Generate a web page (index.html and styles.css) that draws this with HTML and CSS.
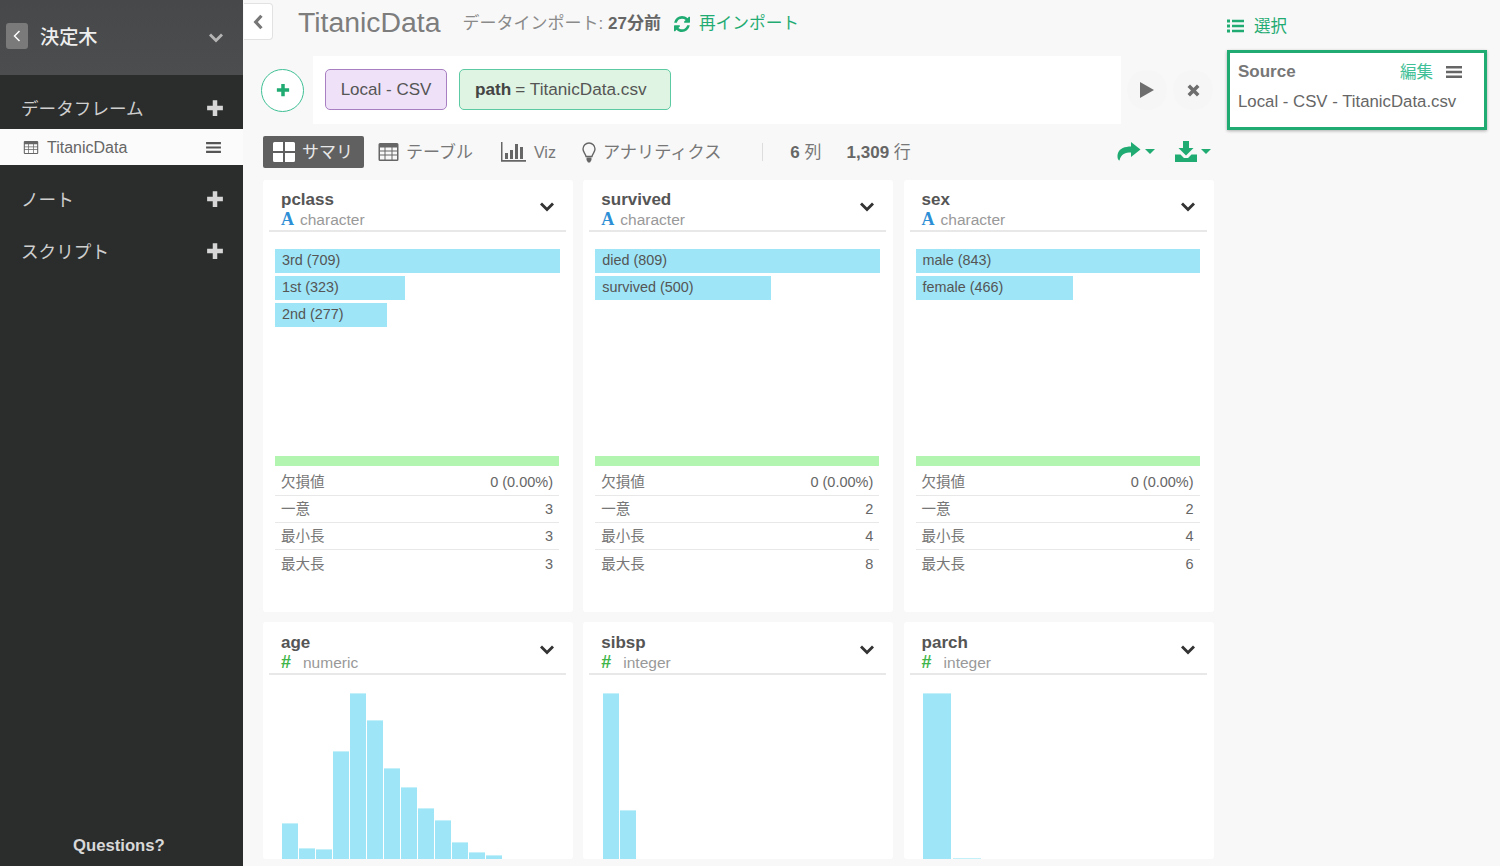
FILE: index.html
```html
<!DOCTYPE html>
<html lang="ja">
<head>
<meta charset="utf-8">
<title>TitanicData</title>
<link rel="stylesheet" href="styles.css">
</head>
<body>
<svg class="defs" width="0" height="0">
  <symbol id="plus" viewBox="0 0 16 16"><path d="M6 1h4v5h5v4h-5v5H6v-5H1V6h5z"/></symbol>
  <symbol id="menu" viewBox="0 0 16 14"><path d="M0 1h16v2.4H0zM0 5.800h16v2.400H0zM0 10.600h16V13H0z"/></symbol>
  <symbol id="chev" viewBox="0 0 16 12"><path d="M1 3.500 3 1.500 8 6.500 13 1.500 15 3.500 8 10.500z"/></symbol>
  <symbol id="table" viewBox="0 0 20 18"><path fill-rule="evenodd" d="M1.500 0h17A1.500 1.500 0 0 1 20 1.500v15a1.500 1.500 0 0 1-1.500 1.500h-17A1.500 1.500 0 0 1 0 16.500v-15A1.500 1.500 0 0 1 1.500 0zM1.500 4.500V7.500h4.500V4.500zM7 4.500V7.500h6V4.500zM14 4.500V7.500h4.500V4.500zM1.500 8.500V11.500h4.500V8.500zM7 8.500V11.500h6V8.500zM14 8.500V11.500h4.500V8.500zM1.500 12.500V16.500h4.500V12.500zM7 12.500V16.500h6V12.500zM14 12.500V16.500h4.500V12.500z"/></symbol>
</svg>

<nav class="sidebar">
  <header class="project">
    <span class="back-chip"><svg width="8" height="12" viewBox="0 0 8 12"><path d="M6.500 1 1.500 6l5 5" fill="none" stroke="#fff" stroke-width="1.500"/></svg></span>
    <span class="project-name">決定木</span>
    <svg class="project-chev" width="16" height="12"><use href="#chev"/></svg>
  </header>
  <div class="side-head side-head-first"><span>データフレーム</span><svg width="18" height="18"><use href="#plus"/></svg></div>
  <div class="side-item">
    <svg class="side-item-icon" width="16" height="13"><use href="#table"/></svg>
    <span class="side-item-name">TitanicData</span>
    <svg class="side-item-menu" width="15" height="13"><use href="#menu"/></svg>
  </div>
  <div class="side-head side-head-note"><span>ノート</span><svg width="18" height="18"><use href="#plus"/></svg></div>
  <div class="side-head side-head-script"><span>スクリプト</span><svg width="18" height="18"><use href="#plus"/></svg></div>
  <div class="questions">Questions?</div>
</nav>

<main class="main">
  <div class="title-row">
    <button class="collapse"><svg width="12" height="16" viewBox="0 0 10 14"><path d="M8 1.500 3 7l5 5.500" fill="none" stroke="#777" stroke-width="2.800"/></svg></button>
    <h1 class="title">TitanicData</h1>
    <span class="imported">データインポート: <b>27分前</b></span>
    <svg class="refresh" width="16" height="16" viewBox="0 0 1536 1536"><path d="M1511 928q0 5-1 7-64 268-268 434.500t-478 166.500q-146 0-282.500-55t-243.500-157l-129 129q-19 19-45 19t-45-19-19-45v-448q0-26 19-45t45-19h448q26 0 45 19t19 45-19 45l-137 137q71 66 161 102t187 36q134 0 250-65t186-179q11-17 53-117 8-23 30-23h192q13 0 22.500 9.500t9.500 22.500zm25-800v448q0 26-19 45t-45 19h-448q-26 0-45-19t-19-45 19-45l138-138q-148-137-349-137-134 0-250 65t-186 179q-11 17-53 117-8 23-30 23h-199q-13 0-22.500-9.500t-9.500-22.500v-7q65-268 270-434.500t480-166.500q146 0 284 55.500t245 156.500l130-129q19-19 45-19t45 19 19 45z"/></svg>
    <span class="reimport">再インポート</span>
  </div>

  <div class="command-row">
    <button class="add"><svg width="14" height="14"><use href="#plus"/></svg></button>
    <div class="command">
      <span class="chip chip-source">Local - CSV</span>
      <span class="chip chip-arg"><b>path</b> = TitanicData.csv</span>
    </div>
    <button class="round"><svg width="14" height="16" viewBox="0 0 14 16"><path d="M0 0 14 8 0 16z"/></svg></button>
    <button class="round round-x"><svg width="13" height="13" viewBox="0 0 11 11"><path d="M1.500 1.500l8 8M9.500 1.500l-8 8" stroke="#6e6e6e" stroke-width="3" fill="none"/></svg></button>
  </div>

  <div class="toolbar">
    <span class="tab tab-active">
      <svg width="22" height="20" viewBox="0 0 22 20"><path d="M1.500 0H10v9H0V1.500A1.500 1.500 0 0 1 1.500 0zM12 0h8.500A1.500 1.500 0 0 1 22 1.500V9H12zM0 11h10v9H1.500A1.500 1.500 0 0 1 0 18.500zM12 11h10v7.500a1.500 1.500 0 0 1-1.500 1.500H12z"/></svg>
      <span class="tab-label">サマリ</span>
    </span>
    <span class="tab tab-table"><svg width="21" height="18"><use href="#table"/></svg><span class="tab-label">テーブル</span></span>
    <span class="tab tab-viz">
      <svg width="25" height="20" viewBox="0 0 25 20"><path d="M0 0h1.500v18H25v1.800H0zM4 11h3v6H4zM9 8h3v9H9zM14 2h3v15h-3zM19 5h3v12h-3z"/></svg>
      <span class="tab-label-latin">Viz</span>
    </span>
    <span class="tab tab-bulb">
      <svg width="14" height="21" viewBox="0 0 14 21"><path fill="none" stroke="#666" stroke-width="1.400" d="M7 1a6 6 0 0 0-6 6c0 3 2.500 4.500 3 7.500h6c.5-3 3-4.500 3-7.500a6 6 0 0 0-6-6z"/><path fill="#666" d="M4.500 15.500h5v2.500l-1.500 2.500H6L4.500 18z"/></svg>
      <span class="tab-label">アナリティクス</span>
    </span>
    <span class="divider"></span>
    <span class="count"><b>6</b> 列</span>
    <span class="count count-rows"><b>1,309</b> 行</span>
    <span class="tool-icons">
      <svg width="24" height="20" viewBox="0 0 24 20"><path d="M14 1 23.500 8.500 14 16V11.500C8.500 11.500 4 13 2.500 19.500 0.500 19 0 15 1 12 2.500 7.500 8 5.500 14 5.500z"/></svg>
      <i class="caret"></i>
      <svg class="dl" width="22" height="21" viewBox="0 0 22 21"><path d="M8 0h6v7h4.500L11 14.500 3.500 7H8zM0 13.500h5.500L9 17h4l3.500-3.500H22V21H0z"/></svg>
      <i class="caret"></i>
    </span>
  </div>

  <div class="cards">
    <section class="card">
      <header class="card-head"><div><h2>pclass</h2><p><b class="type-a">A</b>character</p></div><svg width="16" height="12"><use href="#chev"/></svg></header>
      <div class="levels">
        <div class="level" style="width:285px">3rd (709)</div>
        <div class="level" style="width:130px">1st (323)</div>
        <div class="level" style="width:112px">2nd (277)</div>
      </div>
      <div class="valid"></div>
      <div class="stats">
        <div><span>欠損値</span><span>0 (0.00%)</span></div>
        <div><span>一意</span><span>3</span></div>
        <div><span>最小長</span><span>3</span></div>
        <div><span>最大長</span><span>3</span></div>
      </div>
    </section>
    <section class="card">
      <header class="card-head"><div><h2>survived</h2><p><b class="type-a">A</b>character</p></div><svg width="16" height="12"><use href="#chev"/></svg></header>
      <div class="levels">
        <div class="level" style="width:285px">died (809)</div>
        <div class="level" style="width:176px">survived (500)</div>
      </div>
      <div class="valid"></div>
      <div class="stats">
        <div><span>欠損値</span><span>0 (0.00%)</span></div>
        <div><span>一意</span><span>2</span></div>
        <div><span>最小長</span><span>4</span></div>
        <div><span>最大長</span><span>8</span></div>
      </div>
    </section>
    <section class="card">
      <header class="card-head"><div><h2>sex</h2><p><b class="type-a">A</b>character</p></div><svg width="16" height="12"><use href="#chev"/></svg></header>
      <div class="levels">
        <div class="level" style="width:284px">male (843)</div>
        <div class="level" style="width:157px">female (466)</div>
      </div>
      <div class="valid"></div>
      <div class="stats">
        <div><span>欠損値</span><span>0 (0.00%)</span></div>
        <div><span>一意</span><span>2</span></div>
        <div><span>最小長</span><span>4</span></div>
        <div><span>最大長</span><span>6</span></div>
      </div>
    </section>
    <section class="card card-short">
      <header class="card-head"><div><h2>age</h2><p><b class="type-n">#</b>numeric</p></div><svg width="16" height="12"><use href="#chev"/></svg></header>
      <div class="hist hist-age">
        <i style="height:36px"></i><i style="height:11px"></i><i style="height:10px"></i><i style="height:108px"></i><i style="height:166px"></i><i style="height:139px"></i><i style="height:91px"></i><i style="height:72px"></i><i style="height:51px"></i><i style="height:39px"></i><i style="height:17px"></i><i style="height:7px"></i><i style="height:4px"></i>
      </div>
    </section>
    <section class="card card-short">
      <header class="card-head"><div><h2>sibsp</h2><p><b class="type-n">#</b>integer</p></div><svg width="16" height="12"><use href="#chev"/></svg></header>
      <div class="hist hist-sibsp"><i style="height:166px"></i><i style="height:49px"></i></div>
    </section>
    <section class="card card-short">
      <header class="card-head"><div><h2>parch</h2><p><b class="type-n">#</b>integer</p></div><svg width="16" height="12"><use href="#chev"/></svg></header>
      <div class="hist hist-parch"><i style="height:166px"></i><i style="height:1px"></i></div>
    </section>
  </div>
</main>

<aside class="aside">
  <div class="select">
    <svg width="17" height="14" viewBox="0 0 17 14"><path d="M0 .5h3v3H0zM5 .8h12v2.400H5zM0 5.500h3v3H0zM5 5.800h12v2.400H5zM0 10.500h3v3H0zM5 10.800h12v2.400H5z"/></svg>
    <span>選択</span>
  </div>
  <div class="step">
    <div class="step-head">
      <b>Source</b>
      <span class="step-edit">編集</span>
      <svg width="16" height="14"><use href="#menu"/></svg>
    </div>
    <div class="step-desc">Local - CSV - TitanicData.csv</div>
  </div>
</aside>
</body>
</html>
```

FILE: styles.css
```css
* { box-sizing: border-box; }
html, body { height: 100%; }
body {
  margin: 0;
  height: 866px;
  overflow: hidden;
  display: flex;
  background: #f8f8f8;
  color: #555;
  font-family: "Liberation Sans", "Noto Sans CJK JP", sans-serif;
}
h1, h2, p { margin: 0; font-weight: normal; }
button { padding: 0; font: inherit; cursor: pointer; }
.defs { position: absolute; }

/* sidebar */
.sidebar {
  width: 243px;
  flex: none;
  height: 866px;
  display: flex;
  flex-direction: column;
  background: #2b2d2d;
  color: #c9c9c9;
}
.project {
  height: 75px;
  flex: none;
  display: flex;
  align-items: center;
  padding: 0 19px 3px 6px;
  background: linear-gradient(#474849, #4c4d4f);
}
.back-chip {
  width: 22px;
  height: 26px;
  display: flex;
  align-items: center;
  justify-content: center;
  border-radius: 3px;
  background: #7a7a7a;
}
.project-name {
  margin: -1px 0 0 12px;
  font-size: 19.200px;
  font-weight: 500;
  color: #eee;
}
.project-chev { margin: 4px 0 0 auto; fill: #b5b5b5; }
.side-head {
  display: flex;
  align-items: center;
  justify-content: space-between;
  padding: 0 19px 0 21px;
  font-size: 17.600px;
  height: 24px;
  color: #cfcfcf;
}
.side-head span { margin-top: -1px; }
.side-head svg { fill: #d6d6d6; }
.side-head-first { margin-top: 21px; margin-bottom: 9px; }
.side-head-note { margin-top: 22px; }
.side-head-script { margin-top: 28px; }
.side-item {
  height: 36px;
  flex: none;
  display: flex;
  align-items: center;
  padding: 0 22px 0 23px;
  background: #fbfbfb;
  color: #666;
  font-size: 16px;
}
.side-item-icon { fill: #666; }
.side-item-name { margin: 1px 0 0 8px; }
.side-item-menu { margin-left: auto; fill: #555; }
.questions {
  margin-top: auto;
  padding: 0 0 10px 73px;
  font-size: 16.700px;
  font-weight: bold;
  color: #d8d8d8;
}

/* main */
.main { width: 984px; flex: none; }
.title-row { height: 56px; display: flex; align-items: flex-start; }
.collapse {
  width: 29px;
  height: 37px;
  margin: 3px 0 0 1px;
  display: flex;
  align-items: center;
  justify-content: center;
  background: #fff;
  border: 1.500px solid #e2e2e2;
  border-left: none;
  border-radius: 0 4px 4px 0;
}
.title {
  margin: 4px 0 0 25px;
  font-size: 28.400px;
  line-height: 36px;
  color: #7d7d7d;
}
.imported {
  margin: 13px 0 0 22px;
  font-size: 17px;
  line-height: 22px;
  color: #8a8a8a;
}
.imported b { color: #666; }
.refresh { margin: 16px 0 0 13px; fill: #1fab72; }
.reimport {
  margin: 13px 0 0 9px;
  font-size: 16.700px;
  line-height: 22px;
  color: #1fab72;
}

.command-row { height: 68px; display: flex; align-items: center; padding-left: 18px; }
.add {
  width: 43px;
  height: 43px;
  flex: none;
  display: flex;
  align-items: center;
  justify-content: center;
  border: 1.500px solid #3fc096;
  border-radius: 50%;
  background: #fff;
  fill: #1fab72;
}
.command {
  width: 808px;
  height: 68px;
  flex: none;
  margin-left: 9px;
  padding-left: 12px;
  display: flex;
  align-items: center;
  gap: 12px;
  background: #fff;
}
.chip {
  height: 41px;
  margin-top: -1px;
  display: flex;
  align-items: center;
  justify-content: center;
  gap: 4px;
  border-radius: 5px;
  font-size: 17px;
  color: #555;
  border: 1.500px solid;
}
.chip b { color: #444; }
.chip-source { width: 122px; background: #eee1f8; border-color: #a880c2; }
.chip-arg {
  width: 212px;
  justify-content: flex-start;
  padding-left: 15px;
  font-size: 17.200px;
  background: #dff4e2;
  border-color: #5ccaa2;
}
.round {
  width: 40px;
  height: 40px;
  flex: none;
  margin-left: 6px;
  display: flex;
  align-items: center;
  justify-content: center;
  border: none;
  border-radius: 50%;
  background: #f6f6f6;
  fill: #6e6e6e;
}
.round-x { margin-left: 6px; }

.toolbar {
  height: 56px;
  padding: 12px 16px 12px 20px;
  display: flex;
  align-items: center;
  font-size: 17px;
  color: #777;
}
.tab { display: flex; align-items: center; height: 32px; fill: #666; }
.tab-label { margin-top: -3px; }
.tab-label-latin { margin-top: 1px; }
.tab-active {
  width: 101px;
  padding-left: 10px;
  gap: 7px;
  background: #606060;
  border-radius: 2px;
  color: #e8e8e8;
  fill: #fff;
}
.tab-table { margin-left: 14px; gap: 7px; }
.tab-viz { margin-left: 28px; gap: 8px; font-size: 16px; }
.tab-bulb { margin-left: 26px; gap: 7px; font-size: 17.200px; }
.divider { width: 1px; height: 18px; margin-left: 41px; background: #ddd; }
.count { margin: -3px 0 0 27px; font-size: 17px; color: #777; white-space: nowrap; }
.count b { color: #666; }
.count-rows { margin-left: 25px; }
.tool-icons { margin: -2px 0 0 auto; display: flex; align-items: center; fill: #1fab72; }
.caret {
  width: 0;
  height: 0;
  margin-left: 4px;
  border: 5px solid transparent;
  border-top: 5px solid #1fab72;
  border-bottom: none;
}
.dl { margin-left: 20px; }

.cards {
  margin-left: 20px;
  display: grid;
  grid-template-columns: repeat(3, 310px);
  grid-template-rows: 432px 237px;
  column-gap: 10.300px;
  row-gap: 10px;
}
.card {
  background: #fff;
  border-radius: 3px;
  overflow: hidden;
  padding: 0 7px 0 6px;
}
.card-head {
  height: 52px;
  padding: 10px 11px 0 12px;
  display: flex;
  align-items: center;
  justify-content: space-between;
  border-bottom: 2px solid #e8e8e8;
}
.card-head > div { align-self: flex-start; }
.card-head svg { fill: #333; margin-top: -6px; }
.card-head h2 { font-size: 17px; line-height: 20px; font-weight: bold; color: #555; }
.card-head p { font-size: 15.500px; line-height: 18px; color: #999; }
.card-short .card-head { height: 53px; padding-top: 11px; }
.type-a {
  display: inline-block;
  width: 19px;
  font-family: "Liberation Serif", serif;
  font-size: 18px;
  color: #2d8fd5;
}
.type-n { display: inline-block; width: 22px; font-size: 18px; color: #3fb54a; }
.levels {
  height: 224px;
  padding: 17px 0 0 6px;
  display: flex;
  flex-direction: column;
  gap: 3px;
}
.level {
  height: 24px;
  flex: none;
  padding-left: 7px;
  background: #9de5f7;
  font-size: 14.400px;
  line-height: 23px;
  color: #555;
  white-space: nowrap;
}
.valid { width: 284px; height: 10px; margin-left: 6px; background: #b2f5b0; }
.stats { width: 284px; margin: 3px 0 0 6px; font-size: 14.500px; color: #777; }
.stats div {
  height: 27px;
  padding: 0 6px;
  display: flex;
  align-items: center;
  justify-content: space-between;
  border-bottom: 1.500px solid #e8e8e8;
}
.stats div:last-child { border-bottom: none; }
.stats span:first-child { margin-top: -3px; }
.stats span:last-child { color: #666; }
.hist { height: 184px; display: flex; align-items: flex-end; gap: 1px; padding-left: 13px; }
.hist i { display: block; background: #9de5f7; border-top: 1px solid #c4f0fa; }
.hist-age i { width: 16px; }
.hist-sibsp { padding-left: 14px; }
.hist-sibsp i { width: 16px; }
.hist-parch i { width: 28px; }
.hist-parch { gap: 2px; }

/* aside */
.aside { width: 260px; flex: none; }
.select {
  height: 50px;
  padding-top: 15px;
  display: flex;
  align-items: flex-start;
  gap: 10px;
  fill: #1fab72;
  color: #1fab72;
  font-size: 16.500px;
  line-height: 22px;
}
.select svg { margin-top: 4px; }
.step {
  height: 80px;
  padding: 9px 8px 0 8px;
  background: #fff;
  border: 3px solid #1fab72;
  box-shadow: 0 1px 3px rgba(0, 0, 0, .3);
}
.step-head { display: flex; align-items: center; fill: #666; height: 20px; }
.step-head b { font-size: 17px; color: #777; }
.step-edit { margin: -2px 13px 0 auto; font-size: 16.500px; color: #3fc096; }
.step-head svg { margin-right: 14px; }
.step-desc { margin-top: 10px; font-size: 16.800px; color: #666; white-space: nowrap; }
```
